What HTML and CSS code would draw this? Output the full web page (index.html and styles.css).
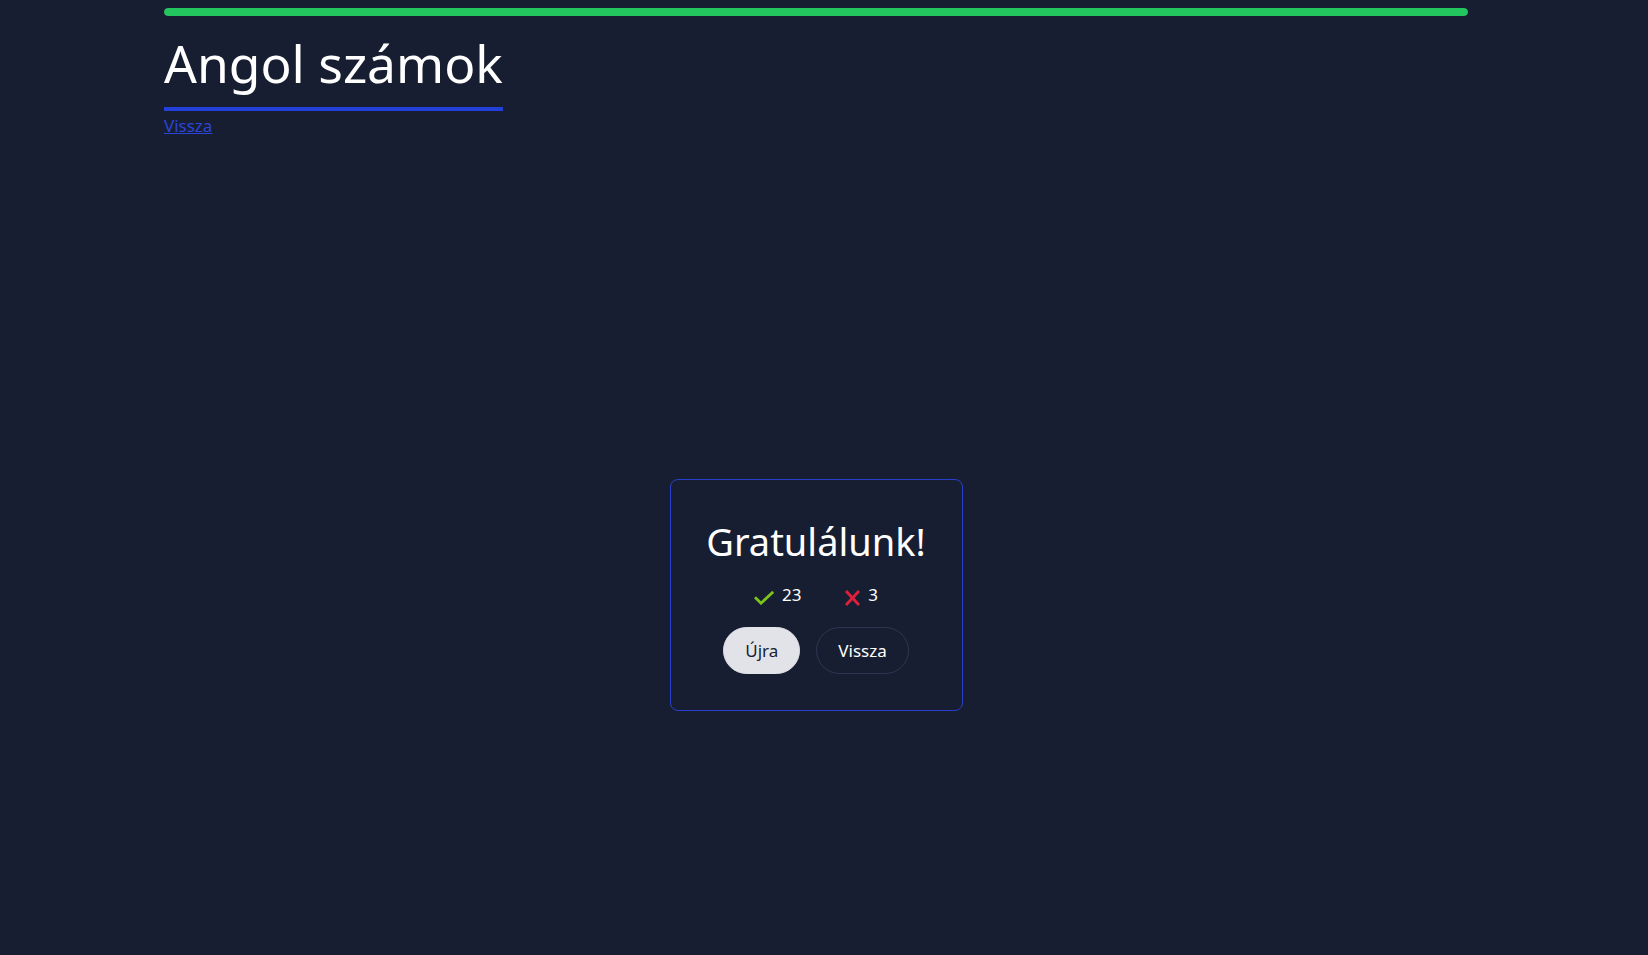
FILE: index.html
```html
<!DOCTYPE html>
<html lang="hu">
<head>
<meta charset="utf-8">
<title>Angol számok</title>
<link rel="stylesheet" href="styles.css">
</head>
<body>
<div class="page">
  <header class="header">
    <div class="progress"><div class="progress-fill" style="width:100%"></div></div>
    <h1 class="title">Angol számok</h1>
    <a class="back-link" href="#">Vissza</a>
  </header>
  <main class="main">
    <section class="card">
      <h2 class="card-title">Gratulálunk!</h2>
      <div class="stats">
        <span class="stat">
          <svg class="icon" viewBox="0 0 20 14" width="20" height="14" fill="none" stroke="#7cc41a" stroke-width="2.8" stroke-linecap="square" stroke-linejoin="miter"><path d="M2 7.2l5 5L18.2 1.8"/></svg>
          <span>23</span>
        </span>
        <span class="stat">
          <svg class="icon icon-x" viewBox="0 0 15 16" width="15" height="16" fill="none" stroke="#e0203a" stroke-width="2.9" stroke-linecap="butt"><path d="M1 1l13 14M14 1L1 15"/></svg>
          <span>3</span>
        </span>
      </div>
      <div class="actions">
        <button class="btn btn-primary">Újra</button>
        <button class="btn btn-outline">Vissza</button>
      </div>
    </section>
  </main>
</div>
</body>
</html>
```
FILE: styles.css
```css
html, body {
  margin: 0;
  padding: 0;
  background: #181e31;
  color: #ffffff;
  font-family: "Noto Sans", "Open Sans", sans-serif;
}
body {
  padding-right: 16px;
  min-height: 955px;
  box-sizing: border-box;
}
.page {
  width: 1304px;
  margin: 0 auto;
}
.header {
  padding-top: 8px;
}
.progress {
  height: 8px;
  border-radius: 4px;
  background: #2a3350;
  overflow: hidden;
}
.progress-fill {
  height: 100%;
  background: #22c55e;
  border-radius: 4px;
}
.title {
  display: inline-block;
  margin: 15px 0 0 0;
  font-size: 51.5px;
  font-weight: 400;
  line-height: 64px;
  border-bottom: 4px solid #2341d9;
  padding-bottom: 12px;
}
.back-link {
  display: block;
  width: max-content;
  color: #2b45d8;
  font-size: 17px;
  line-height: 22px;
  margin-top: 4px;
}
.main {
  display: flex;
  justify-content: center;
  padding-top: 342px;
}
.card {
  width: 293px;
  box-sizing: border-box;
  border: 1px solid #2741cc;
  border-radius: 8px;
  padding: 37px 0 36px;
  display: flex;
  flex-direction: column;
  align-items: center;
}
.card-title {
  margin: 0;
  font-size: 38px;
  font-weight: 400;
  line-height: 48px;
}
.stats {
  display: flex;
  gap: 44px;
  margin-top: 18px;
  font-size: 17px;
  line-height: 24px;
}
.stat {
  display: flex;
  align-items: center;
  gap: 8px;
}
.icon {
  display: block;
  margin-top: 6px;
}
.actions {
  display: flex;
  gap: 16px;
  margin-top: 20px;
}
.btn {
  font-family: inherit;
  font-size: 17px;
  line-height: 23px;
  border-radius: 24px;
  padding: 11px 21px;
  cursor: pointer;
}
.btn-primary {
  background: #e2e3e8;
  color: #181e31;
  border: 1px solid #e2e3e8;
}
.btn-outline {
  background: transparent;
  color: #ffffff;
  border: 1px solid #2d3752;
}
```
